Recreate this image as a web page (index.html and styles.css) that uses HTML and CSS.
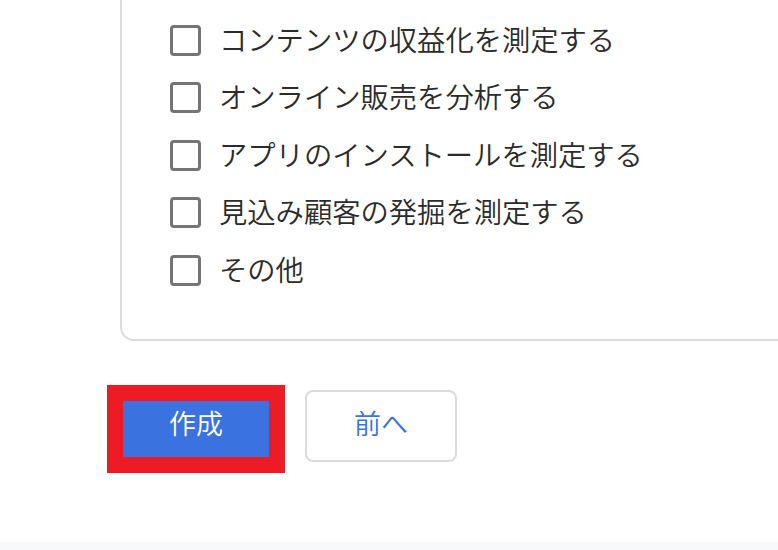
FILE: index.html
```html
<!DOCTYPE html>
<html lang="ja">
<head>
<meta charset="utf-8">
<link rel="stylesheet" href="styles.css">
</head>
<body>
<div class="page">
  <div class="card">
    <ul class="options">
      <li class="option"><span class="box"></span><span class="label">コンテンツの収益化を測定する</span></li>
      <li class="option"><span class="box"></span><span class="label">オンライン販売を分析する</span></li>
      <li class="option"><span class="box"></span><span class="label">アプリのインストールを測定する</span></li>
      <li class="option"><span class="box"></span><span class="label">見込み顧客の発掘を測定する</span></li>
      <li class="option"><span class="box"></span><span class="label">その他</span></li>
    </ul>
  </div>
  <div class="actions">
    <div class="highlight"><button class="btn btn-primary">作成</button></div>
    <button class="btn btn-secondary">前へ</button>
  </div>
</div>
<div class="footer"></div>
</body>
</html>
```
FILE: styles.css
```css
html, body {
  margin: 0;
  padding: 0;
  background: #ffffff;
  overflow: hidden;
}
body {
  font-family: "Noto Sans CJK JP", "Noto Sans", sans-serif;
  color: #333333;
  width: 778px;
  height: 550px;
}
.page {
  display: flex;
  flex-direction: column;
}
.card {
  margin-left: 120px;
  margin-right: -30px;
  border: 2px solid #dadce0;
  border-top: none;
  border-radius: 0 0 14px 14px;
  padding: 10px 0 41px 48px;
}
.options {
  list-style: none;
  margin: 0;
  padding: 0;
}
.option {
  display: flex;
  align-items: center;
  height: 57.5px;
  gap: 18px;
}
.box {
  width: 31px;
  height: 31px;
  box-sizing: border-box;
  border: 3px solid #757575;
  border-radius: 4px;
  flex: none;
  margin-top: 3px;
}
.label {
  font-size: 28.3px;
  font-weight: 350;
  line-height: 1;
  color: #2b2b2b;
}
.actions {
  display: flex;
  align-items: flex-start;
  margin-top: 44px;
  padding-left: 107px;
  gap: 20px;
}
.highlight {
  background: #ed1c24;
  padding: 16px;
  display: flex;
}
.btn {
  font-family: "Noto Sans CJK JP", "Noto Sans", sans-serif;
  font-size: 27px;
  font-weight: 350;
  line-height: 1;
  cursor: pointer;
  margin: 0;
}
.btn-primary {
  width: 146px;
  height: 56px;
  background: #3a73df;
  color: #ffffff;
  border: none;
  border-radius: 0;
  padding: 0 0 12px 0;
}
.btn-secondary {
  margin-top: 5px;
  width: 152px;
  height: 72px;
  background: #ffffff;
  color: #3a73df;
  border: 2px solid #dadce0;
  border-radius: 8px;
  padding: 0 0 6px 0;
}
.footer {
  margin-top: 69px;
  height: 20px;
  background: #f8f9fa;
}
```
